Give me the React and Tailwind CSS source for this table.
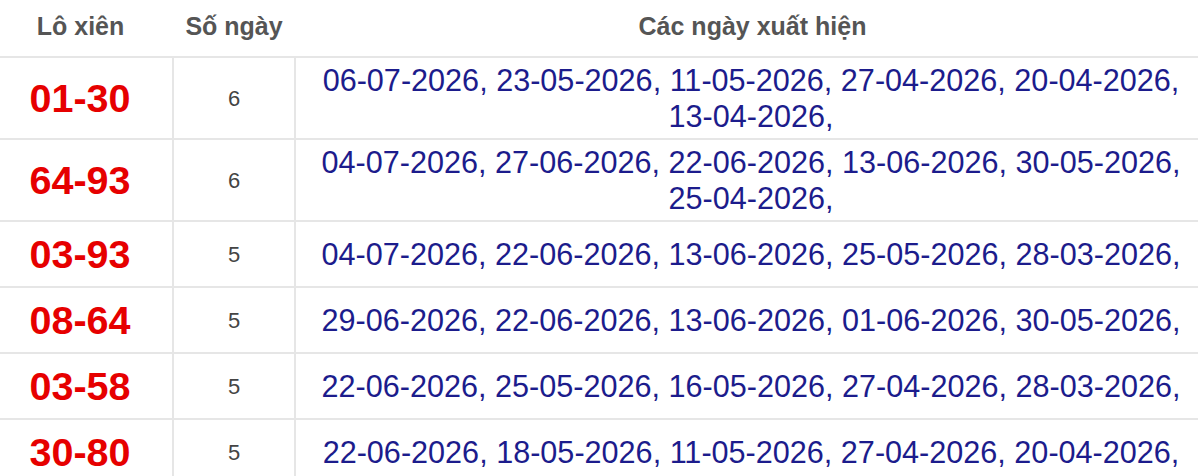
import React from 'react';

const rows = [
    { pair: '01-30', days: 6, dates: ['06-07-2026', '23-05-2026', '11-05-2026', '27-04-2026', '20-04-2026', '13-04-2026'] },
    { pair: '64-93', days: 6, dates: ['04-07-2026', '27-06-2026', '22-06-2026', '13-06-2026', '30-05-2026', '25-04-2026'] },
    { pair: '03-93', days: 5, dates: ['04-07-2026', '22-06-2026', '13-06-2026', '25-05-2026', '28-03-2026'] },
    { pair: '08-64', days: 5, dates: ['29-06-2026', '22-06-2026', '13-06-2026', '01-06-2026', '30-05-2026'] },
    { pair: '03-58', days: 5, dates: ['22-06-2026', '25-05-2026', '16-05-2026', '27-04-2026', '28-03-2026'] },
    { pair: '30-80', days: 5, dates: ['22-06-2026', '18-05-2026', '11-05-2026', '27-04-2026', '20-04-2026'] },
];

const App = () => {
    return (
        <div className="w-[1200px] h-[476px] overflow-hidden bg-white font-['Liberation_Sans',Arial,sans-serif]">
            <table className="ml-[-12px] w-[1210px] border-collapse table-fixed">
                <colgroup>
                    <col className="w-[185px]" />
                    <col className="w-[122px]" />
                    <col className="w-[903px]" />
                </colgroup>
                <thead>
                    <tr className="h-[57px] border-b-2 border-[#e6e6e6]">
                        <th className="text-center text-[25px] font-bold text-[#555] pb-[2px]">Lô xiên</th>
                        <th className="text-center text-[25px] font-bold text-[#555] pb-[2px]">Số ngày</th>
                        <th className="text-center text-[25px] font-bold text-[#555] pb-[2px] pl-[12px]">Các ngày xuất hiện</th>
                    </tr>
                </thead>
                <tbody>
                    {/* every row: red pair, count, list of dates */}
                    {rows.map((row) => (
                        <tr key={row.pair} className="border-b-2 border-[#e6e6e6]">
                            <td className="text-center align-middle py-[5px] border-r-2 border-[#e6e6e6]">
                                <span className="text-[39.5px] leading-[54px] font-bold text-[#e60000]">{row.pair}</span>
                            </td>
                            <td className="text-center align-middle py-[5px] border-r-2 border-[#e6e6e6] text-[22px] text-[#444]">
                                {row.days}
                            </td>
                            <td className="text-center align-middle py-[4px] pl-[12px] pr-[4px] text-[30.6px] leading-[36px] text-[#1c1c8c]">
                                {row.dates.map((d) => `${d}, `).join('').trimEnd()}
                            </td>
                        </tr>
                    ))}
                </tbody>
            </table>
        </div>
    );
};

export default App;
